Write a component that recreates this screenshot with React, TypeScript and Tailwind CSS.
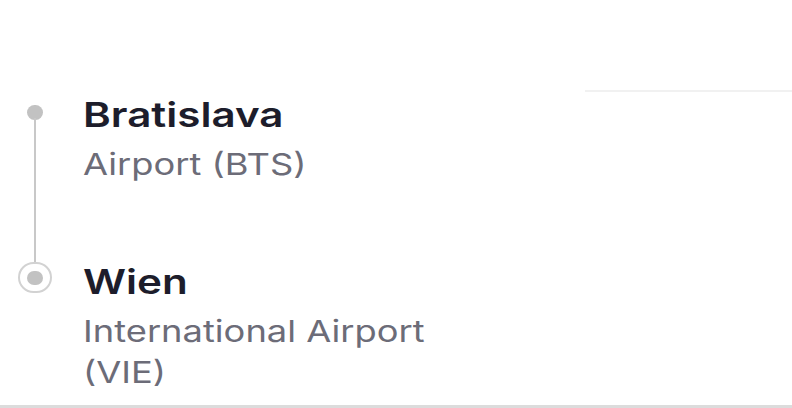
import React from "react";

const stops = [
  { city: "Bratislava", place: "Airport (BTS)" },
  { city: "Wien", place: "International Airport (VIE)" },
];

const App: React.FC = () => {
  return (
    <div
      className="h-[408px] w-full bg-white border-b-[3px] border-[#dcdcdc] flex flex-col overflow-hidden"
      style={{ fontFamily: "Inter, 'Noto Sans', sans-serif" }}
    >
      {/* divider from the block above */}
      <div className="flex justify-end pt-[90px]">
        <div className="w-[207px] h-[2px] bg-[#f1f1f1]" />
      </div>

      <div className="flex flex-col pt-[3px]">
        {/* Departure */}
        <div className="flex">
          <div className="w-[70px] flex flex-col items-center pt-[10px]">
            <div className="w-[16px] h-[15px] rounded-full bg-[#c2c2c2]" />
            <div className="w-[2px] flex-1 bg-[#c8c8c8] -mt-[2px]" />
          </div>
          <div className="ml-[13px] pb-[77px]">
            <h2 className="text-[34px] leading-[40px] font-semibold text-[#1d1d2b] origin-left scale-x-[1.24]">
              {stops[0].city}
            </h2>
            <p className="mt-[9px] text-[30px] leading-[41px] text-[#6c6c78] w-[300px] origin-left scale-x-[1.21]">
              {stops[0].place}
            </p>
          </div>
        </div>

        {/* Arrival */}
        <div className="flex">
          <div className="w-[70px] flex flex-col items-center">
            <div className="w-[34px] h-[31px] rounded-full border-2 border-[#d2d2d2] flex items-center justify-center">
              <div className="w-[16px] h-[14px] rounded-full bg-[#c2c2c2]" />
            </div>
          </div>
          <div className="ml-[13px]">
            <h2 className="text-[34px] leading-[40px] font-semibold text-[#1d1d2b] origin-left scale-x-[1.24]">
              {stops[1].city}
            </h2>
            <p className="mt-[9px] text-[30px] leading-[41px] text-[#6c6c78] w-[300px] origin-left scale-x-[1.21]">
              {stops[1].place}
            </p>
          </div>
        </div>
      </div>
    </div>
  );
};

export default App;
